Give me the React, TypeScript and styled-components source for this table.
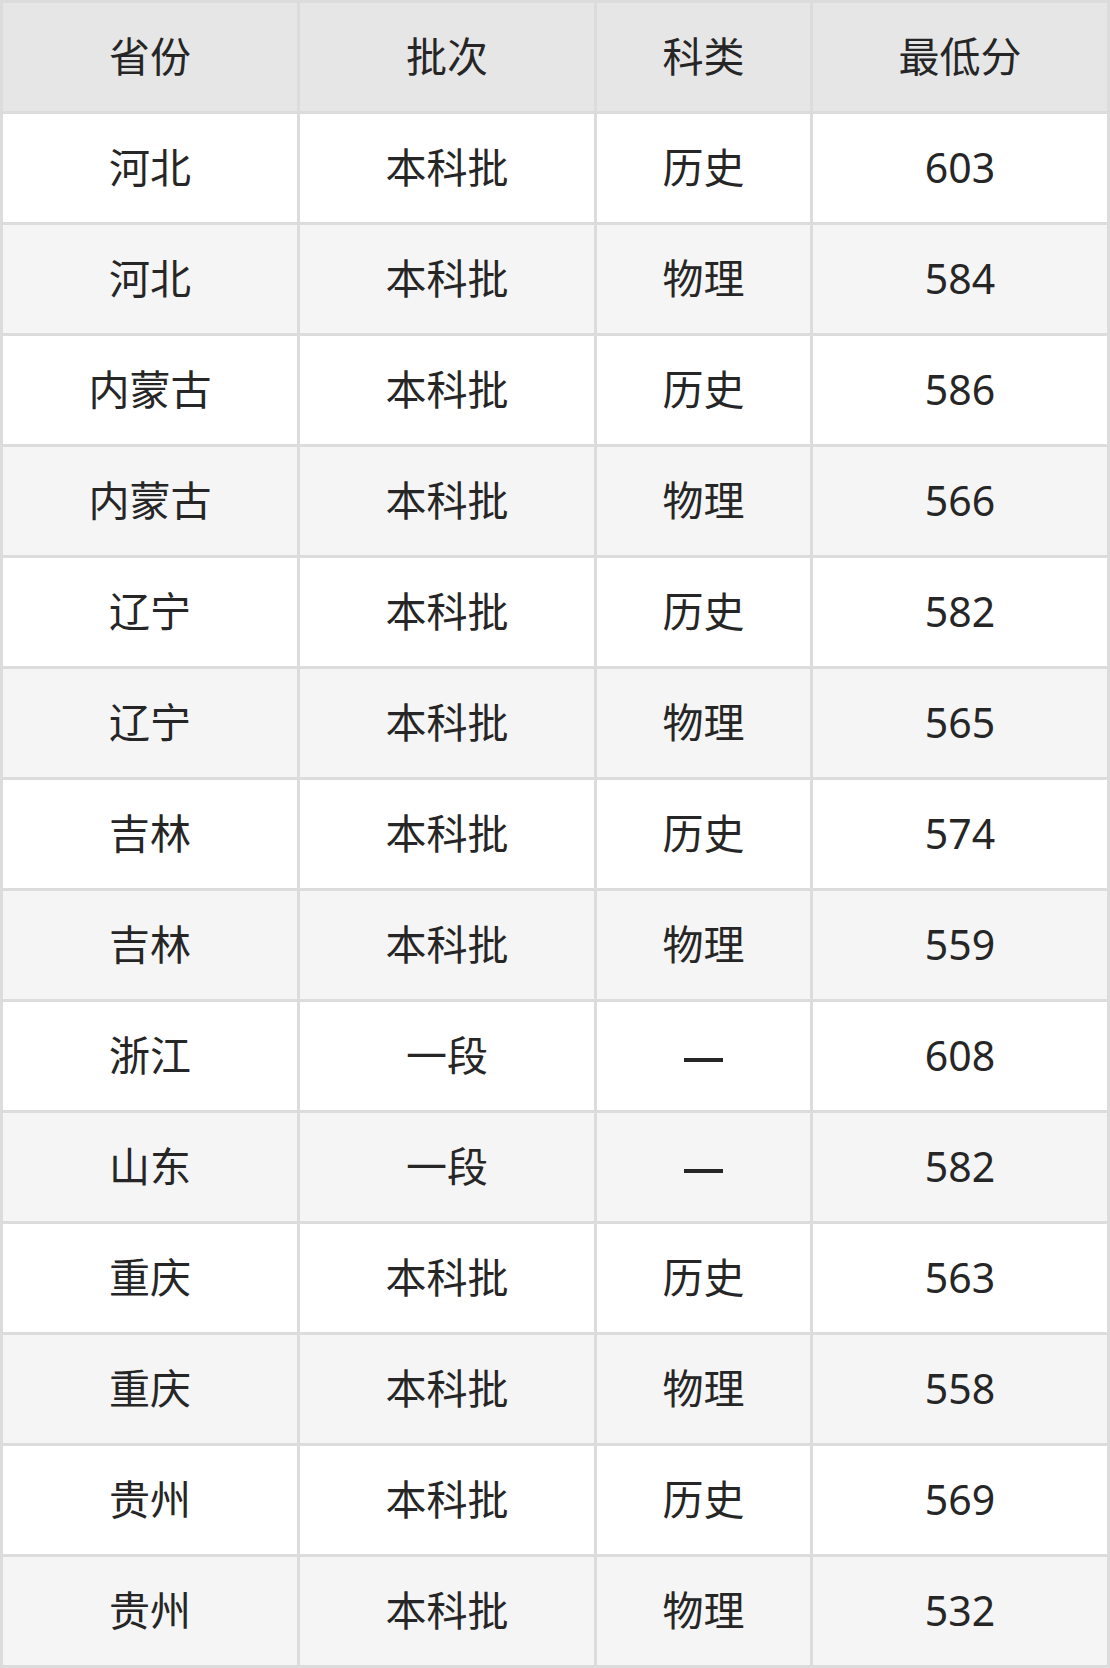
import React from 'react';
import styled, { createGlobalStyle } from 'styled-components';

type Row = { province: string; batch: string; subject: string; score: string };

const rows: Row[] = [
  { province: '河北', batch: '本科批', subject: '历史', score: '603' },
  { province: '河北', batch: '本科批', subject: '物理', score: '584' },
  { province: '内蒙古', batch: '本科批', subject: '历史', score: '586' },
  { province: '内蒙古', batch: '本科批', subject: '物理', score: '566' },
  { province: '辽宁', batch: '本科批', subject: '历史', score: '582' },
  { province: '辽宁', batch: '本科批', subject: '物理', score: '565' },
  { province: '吉林', batch: '本科批', subject: '历史', score: '574' },
  { province: '吉林', batch: '本科批', subject: '物理', score: '559' },
  { province: '浙江', batch: '一段', subject: '—', score: '608' },
  { province: '山东', batch: '一段', subject: '—', score: '582' },
  { province: '重庆', batch: '本科批', subject: '历史', score: '563' },
  { province: '重庆', batch: '本科批', subject: '物理', score: '558' },
  { province: '贵州', batch: '本科批', subject: '历史', score: '569' },
  { province: '贵州', batch: '本科批', subject: '物理', score: '532' },
];

const GlobalStyle = createGlobalStyle`
  html, body {
    margin: 0;
    padding: 0;
    background: #fff;
  }
`;

const Table = styled.div`
  display: grid;
  grid-template-columns: 294px 294px 213px 294px;
  grid-auto-rows: 108px;
  gap: 3px;
  padding: 3px;
  width: 1110px;
  height: 1668px;
  box-sizing: border-box;
  background: #dcdcdc;
  font-family: 'Noto Sans', 'Noto Sans CJK SC', sans-serif;
  font-size: 41px;
  color: #262626;
`;

type CellProps = { $tone: 'head' | 'odd' | 'even' };
const Cell = styled.div<CellProps>`
  display: flex;
  align-items: center;
  justify-content: center;
  padding-bottom: 2px;
  box-sizing: border-box;
  background: ${p => (p.$tone === 'head' ? '#e6e6e6' : p.$tone === 'even' ? '#f5f5f5' : '#ffffff')};
  line-height: 1;
`;

// the empty subject mark: a short heavy bar sitting a bit under the middle
const Dash = styled.span`
  display: block;
  width: 39px;
  height: 4px;
  margin-top: 10px;
  background: #262626;
`;

const headers = ['省份', '批次', '科类', '最低分'];

export default function App() {
  return (
    <>
      <GlobalStyle />
      <Table>
        {headers.map(h => (
          <Cell key={h} $tone="head">
            {h}
          </Cell>
        ))}
        {rows.map((r, i) => {
          const tone = i % 2 === 0 ? 'odd' : 'even';
          return (
            <React.Fragment key={i}>
              <Cell $tone={tone}>{r.province}</Cell>
              <Cell $tone={tone}>{r.batch}</Cell>
              <Cell $tone={tone}>
                {r.subject === '—' ? <Dash role="img" aria-label="—" /> : r.subject}
              </Cell>
              <Cell $tone={tone}>{r.score}</Cell>
            </React.Fragment>
          );
        })}
      </Table>
    </>
  );
}
